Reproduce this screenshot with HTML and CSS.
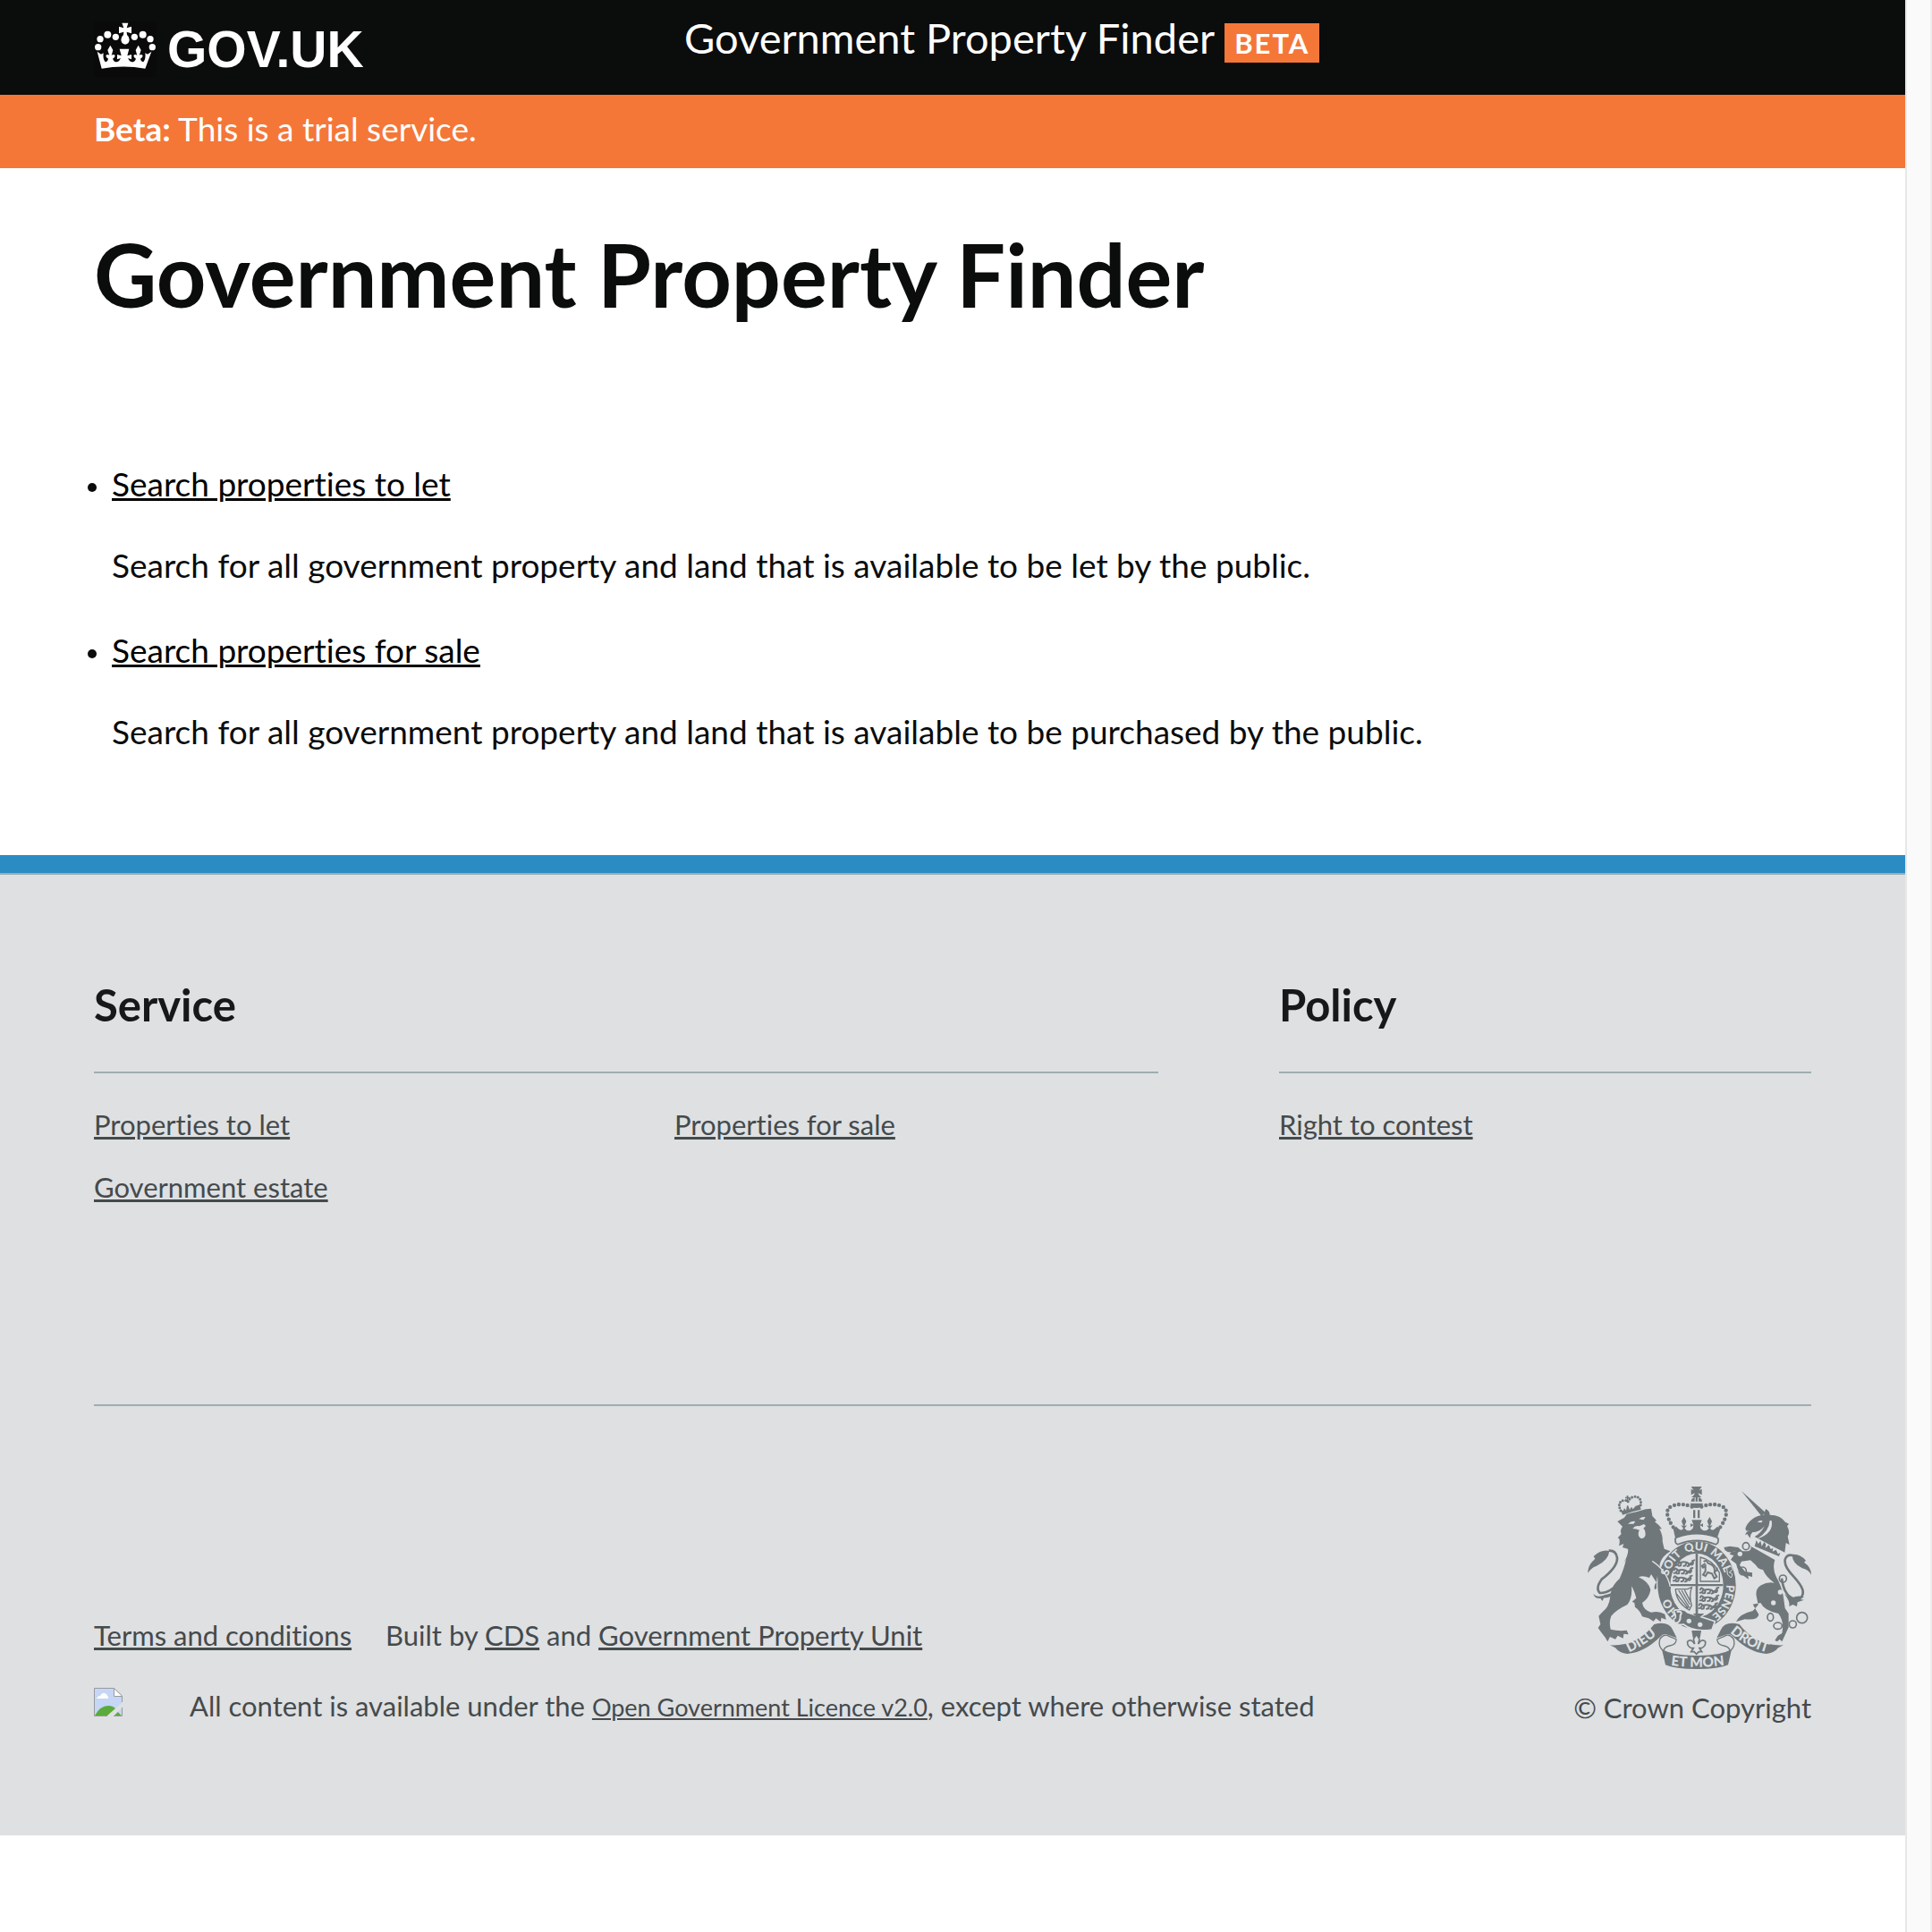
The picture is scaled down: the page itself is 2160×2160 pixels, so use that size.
FILE: index.html
```html
<!DOCTYPE html>
<html lang="en">
<head>
<meta charset="utf-8">
<meta name="viewport" content="width=device-width, initial-scale=1">
<title>Government Property Finder</title>
<link rel="stylesheet" href="styles.css">
</head>
<body>
<div class="page">
  <header class="site-header">
    <div class="container header-grid">
      <a class="logo" href="#">
        <svg class="logo-crown" viewBox="45 42 210 186" aria-hidden="true">
          <g fill="#fff">
            <circle cx="59" cy="128" r="11"/><circle cx="66" cy="101" r="11"/><circle cx="91" cy="86" r="12"/><circle cx="118" cy="94" r="11"/>
            <circle cx="181" cy="94" r="11"/><circle cx="209" cy="86" r="12"/><circle cx="234" cy="101" r="11"/><circle cx="241" cy="128" r="11"/>
            <path d="M139 47h21l-5 17 16-5v23l-16-5 1 10q8 6 8 16 0 15-14 16-14-1-14-16 0-10 8-16l1-10-16 5V59l16 5z"/>
            <path d="M57 143l13 9 8-4q-3 20 6 30 8-1 10-11-8-4-8-11 7-6 12 0l-6-18 9-16 9 16-5 18q6-6 12 0 0 7-8 11 4 12 15 11 8-3 12-13l-12 4v-16l14 4-6-23h32l-6 23 14-4v16l-12-4q4 10 12 13 11 1 15-11-8-4-8-11 6-6 12 0l-5-18 9-16 9 16-6 18q5-6 12 0 0 7-8 11 2 10 10 11 9-10 6-30l8 4 13-9-21 57q-73-13-146 0z" transform="translate(-1 0)"/>
          </g>
        </svg>
        <span class="logo-text">GOV.UK</span>
      </a>
      <div class="header-title"><a href="#">Government Property Finder</a> <span class="badge">BETA</span></div>
    </div>
  </header>

  <div class="beta-bar">
    <p class="container"><strong>Beta:</strong> This is a trial service.</p>
  </div>

  <main class="container content">
    <h1>Government Property Finder</h1>
    <ul class="services">
      <li>
        <a href="#">Search properties to let</a>
        <p>Search for all government property and land that is available to be let by the public.</p>
      </li>
      <li>
        <a href="#">Search properties for sale</a>
        <p>Search for all government property and land that is available to be purchased by the public.</p>
      </li>
    </ul>
  </main>

  <footer class="footer">
    <div class="container">
      <div class="footer-nav">
        <section>
          <h2>Service</h2>
          <ul class="links two-col">
            <li><a href="#">Properties to let</a></li>
            <li><a href="#">Properties for sale</a></li>
            <li><a href="#">Government estate</a></li>
          </ul>
        </section>
        <section>
          <h2>Policy</h2>
          <ul class="links">
            <li><a href="#">Right to contest</a></li>
          </ul>
        </section>
      </div>
      <div class="footer-meta">
        <div class="meta-text">
          <ul class="meta-links">
            <li><a href="#">Terms and conditions</a></li>
            <li>Built by <a href="#">CDS</a> and <a href="#">Government Property Unit</a></li>
          </ul>
          <div class="licence">
            <svg class="licence-icon" viewBox="0 0 32 32" aria-hidden="true">
              <path d="M1 1h21.500l8.500 8.500V31H1z" fill="#c6d6f5"/>
              <path d="M3 12q1-3 4-3 2-4 5-3 3 1 3 3 2 1 1 3z" fill="#fff"/>
              <path d="M1 31q6-11 15-11 5 0 8 3l5 8z" fill="#5aab3c"/>
              <path d="M22.500 1v8.500H31z" fill="#fff"/>
              <path d="M32 16v6l-9 9h-8z" fill="#dee0e2"/>
              <path d="M27 27l-4 4h8z" fill="#5aab3c"/>
              <path d="M27 27l4-4v8z" fill="#c6d6f5"/>
              <path d="M31.500 16V9L22.500 .5H.5v31H15M22.500 1v8.500H31M31.500 22v9.500H22" fill="none" stroke="#979b9f"/>
            </svg>
            <p>All content is available under the <a class="ogl" href="#">Open Government Licence v2.0</a>, except where otherwise stated</p>
          </div>
        </div>
        <a class="copyright" href="#">
          <svg class="crest" viewBox="105 66 750 612" aria-hidden="true">
            <defs>
              <path id="garter" d="M471 514A99 117 0 0 1 471 280A99 117 0 0 1 471 514"/>
              <path id="motto-l" d="M244 622Q300 598 352 550"/>
              <path id="motto-c" d="M384 665Q471 677 562 665"/>
              <path id="motto-r" d="M582 555Q634 602 706 622"/>
              <g id="mini-lion" fill="none" stroke="#6f777b" stroke-width="6" stroke-linecap="round">
                <path d="M2 7q2-8 7-4l6 5q12-4 24 0l8 6 7-6M12 8l-5 8-6 1M19 9l-2 9-6 1M36 9l-3 9-6 1M43 11l2 7-5 2M47 12q8 8 12-2l-2-8 6-2"/>
              </g>
            </defs>
            <g fill="#6f777b">
              <!-- lion -->
              <path d="M205 183l23-13 8-12q39-8 64-16l18-2 4 25 14 15-6 4q15 11 24 24h-8q12 24 10 42l6 25 21 8q-31 17-37 47l26 28q12 22 12 46l-8 24-8-16-6 14-8-18-10 14v-20l-14 10q-4-17 6-24l-18-28-6 12q-22-10-36-2 34 15 40 42-4 28-28 44 4 24 30 32 27-6 46 6l4 18-16-6-2 14-16-12-8 10-16-10-22-6q-8-22-24-32l-2-14-8-4 14-12q-6-25-16-40 4 40-14 62-38 18-54 38-8 20-2 45 28 7 54 3l6 14-16-2-2 15-18-9-8 12-18-8-8 16-8-14q-14-17-24-32l8-12-6-28 14-15q20-15 24-45 2-40 32-65 16-35 22-65l-8 12q18-32 14-47l-18-5 4-12-16 7q6-25-4-27l12-13q-6-13 4-25z"/>
              <path d="M178 282q-27-6-53 18l5 8q-25 22-24 48 14-21 29-24 40-19 43-50z"/>
              <path d="M124 425q12 16 40 4 22-4 30-12-10 24-34 22l-6 11-6-9q-20 2-24-16z"/>
              <!-- lion crown -->
              <path d="M222 161l-7-20 9 7 4-10 6 8 3-16h4l5 14 6-10 5 8 9-11 14-4 4 16q-30 6-62 18z"/>
              <path d="M236 96h5v5h6v5h-6v12h-4v-12h-6v-5h5z"/>
              <g fill="none" stroke="#6f777b" stroke-width="9" stroke-dasharray="0 10" stroke-linecap="round"><path d="M216 147q-14-31 12-35 8 0 12 6 6-16 22-18 27 0 20 32"/></g>
              <!-- unicorn -->
              <path d="M621 81l81 73-14 11z"/>
              <path d="M634 208q4-18 22-32 16-14 40-15l6-20q14 6 14 20 36 0 52 24l12 6-6 8q12 20 2 34l6 28-12-6-4 32q-70-34-98-46l-4-6q24-14 34-36-18 22-40 20l-6 8-2 12-10-14-6 4q0-10 14-16l-10 2z"/>
              <path d="M645 262l88 50q-10 30 6 60 14 22 22 60l6 42 12 18v46l-22 48-8-8-8 8-8-4 10-16 14-8q8-40-12-66-48-10-60-36l-26 5 20 34q-2 20-46 16l-30 8q12-26 56-36l18-20-6-30q-4-24 16-36 20-12 44-8-28-20-38-44-16-2-24-16l-18-16-30 4-6 12 18 22 24 4v14l-14-4 2 12-20-14q-16-10-22-38l-18-14 10-14-14-4 8-10h50q16 0 14-18z"/>
              <path d="M640 310l-24-6-4-16-16-6q-14 10-30-2l-4-10 20-4 28 4 16 14 6 16z"/>
              <path d="M791 294q24-4 46 20l-6 6q24 16 24 42-10-18-30-22-34-16-34-46z"/>
              <path d="M765 426q18 14 28 12 16-8 38-2l-14 8 14 2-22 8-2 14-14-6-12 6q4-16-16-42z"/>
            </g>
            <!-- faces, chain and collar -->
            <g fill="#dee0e2">
              <path d="M240 191q12-12 25-8l-6 8zM277 175q12-10 22-6l-7 9z"/>
              <path d="M256 207q8-12 22-8l16-7 6 6-8 8q6 4 7 18a12 15 0 0 1-24 2q0-10 4-14-12-4-23-5z"/>
              <path d="M674 185q8-8 18-4l-4 6zM657 238l8-4 96 52-14 26-92-44z"/>
              <path d="M722 180q8 44-50 62 42-24 44-62z"/>
              <circle cx="751" cy="420" r="8"/><circle cx="728" cy="456" r="8"/><circle cx="616" cy="292" r="8"/>
            </g>
            <path fill="#6f777b" d="M665 266l6-20 6 12 8-10 4 18 8-14 6 8-2 12 12-10 6 14 8-4-2 12 12-6 6 14 8-4-4 12z"/>
            <g fill="none" stroke="#6f777b">
              <path d="M216 385q-40 40-70 38-16-16 6-46 54-42 52-72-4-26-28-24" stroke-width="8"/>
              <path d="M756 374q8 66 52 72 24-10 18-34-6-18-28-42-38-38-30-62 8-18 28-10" stroke-width="8"/>
              <g stroke-width="5"><ellipse cx="636" cy="266" rx="11" ry="12"/><ellipse cx="625" cy="349" rx="12" ry="13"/><ellipse cx="760" cy="375" rx="12" ry="12"/><ellipse cx="718" cy="504" rx="10" ry="13"/><ellipse cx="743" cy="533" rx="14" ry="11"/><circle cx="793" cy="528" r="12"/><circle cx="824" cy="506" r="18"/></g>
            </g>
            <!-- garter -->
            <ellipse cx="471" cy="397" rx="135" ry="151" fill="#dee0e2"/>
            <ellipse cx="471" cy="397" rx="131" ry="147" fill="#6f777b"/>
            <ellipse cx="471" cy="397" rx="89" ry="107" fill="#dee0e2"/>
            <path d="M335 322l22 28q20 28 27 56l-8 24-8-16-6 14-8-18-10 14z" fill="#6f777b"/>
            <path d="M322 316q50 34 60 86" fill="none" stroke="#dee0e2" stroke-width="4"/>
            <g class="crest-text" font-size="38">
              <text><textPath href="#garter" startOffset="66">HO</textPath></text>
              <text><textPath href="#garter" startOffset="200">SOIT</textPath></text>
              <text><textPath href="#garter" startOffset="301">QUI</textPath></text>
              <text><textPath href="#garter" startOffset="384">MAL</textPath></text>
              <text><textPath href="#garter" startOffset="508">PENSE</textPath></text>
            </g>
            <!-- quartered shield -->
            <g fill="#6f777b"><path d="M467 291h8v212h-8zM383 393h176v7H383z"/></g>
            <use href="#mini-lion" x="400" y="313"/><use href="#mini-lion" x="394" y="339"/><use href="#mini-lion" x="392" y="365"/>
            <use href="#mini-lion" x="481" y="405"/><use href="#mini-lion" x="481" y="431"/><use href="#mini-lion" x="477" y="457"/>
            <g fill="none" stroke="#6f777b" stroke-width="4">
              <path d="M483 384V303q40 8 64 52v29zM400 410h40l14-6q-10 30 0 60l-8 16q-44-24-46-70zM410 414l36 58M420 414l28 48M430 413l20 38M402 424l40 50"/>
              <path d="M494 318q10-8 14 4l16 8q10 14 6 24l8 14-8 6-8-16-14-4-8 12-8-4 8-12v-18l-8 6-4-6 12-8M530 352q12-4 8-14" stroke-width="6"/>
            </g>
            <path d="M572 340l14-8 6 12-12 10q16 2 6 18l-12-12z" fill="#6f777b" stroke="#dee0e2" stroke-width="3"/>
            <!-- garter buckle -->
            <path d="M398 492q-10-14 8-12 22-6 34 8l92 30-10 28q-60 10-96-18-34 6-32-18 10-2 4-18z" fill="#6f777b" stroke="#dee0e2" stroke-width="5"/>
            <path d="M404 486q22-4 12 12 2 26-18 26" fill="none" stroke="#dee0e2" stroke-width="6"/>
            <g fill="#dee0e2"><circle cx="445" cy="517" r="8"/><circle cx="482" cy="529" r="8"/></g>
            <path d="M458 492h38l-14 12h-10z" fill="#6f777b"/>
            <!-- royal crown -->
            <g fill="#6f777b">
              <path d="M452 66h36l-9 13 9-5v20l-12-6q0 6 11 14h-34q11-8 11-14l-12 6V74l9 5zM467 102h7v14h-7zM452 116q0-10 12-14v14zM489 116q0-10-12-14v14zM449 122h43q-3 15-22 16-18-1-21-16zM459 145h7v27h-7zM474 145h7v27h-7z"/>
              <path d="M392 208l10-8 8 8q10 8 16-2l-8-10 8 2-6-16 8-14 8 14-6 16 8-2-8 10q14 16 28 0l2-10-10 6v-12l10 4-6-16h34l-6 16 10-4v12l-10-6 2 10q14 16 28 0l-8-10 8 2-6-16 8-14 8 14-6 16 8-2-8 10q6 10 16 2l8-8 10 8-12 34q-68-24-138 0z"/>
            </g>
            <g fill="none" stroke="#6f777b" stroke-width="13" stroke-linecap="round" stroke-dasharray="0 15">
              <path d="M392 202Q352 142 392 130Q420 120 456 134"/><path d="M550 202Q590 142 550 130Q522 120 486 134"/>
            </g>
            <path d="M405 236q66-24 132 0 8 2 6 12 0 8-8 12-64-26-128 0-8-4-8-12-2-10 6-12z" fill="#dee0e2" stroke="#6f777b" stroke-width="5"/>
            <!-- motto ribbon -->
            <path d="M454 549h32l-4 24h-24z" fill="#6f777b"/>
            <path d="M470 562l10 16-4 16q12-20 24-8 2 16-14 22h-6l8 12h-10l-8 8-8-8h-10l8-12h-6q-16-6-14-22 12-12 24 8l-4-16z" fill="#dee0e2" stroke="#6f777b" stroke-width="5"/>
            <g fill="#6f777b">
              <path d="M180 598q92 4 148-70 48-12 62 18l14 28-28-10q-16-8-28 6-52 52-110 57-26-2-40-20z"/>
              <path d="M762 598q-92 4-148-70-48-12-62 18l-14 28 28-10q16-8 28 6 52 52 110 57 26-2 40-20z"/>
              <path d="M354 612q40 22 117 21 77 1 117-21l-12 52q-30 14-105 14t-105-14z"/>
            </g>
            <g fill="#dee0e2" stroke="#6f777b" stroke-width="4">
              <path d="M348 576q14-18 30-8l24 10q2 18-22 22-20 4-20 18-18-14-14-34z"/>
              <path d="M594 576q-14-18-30-8l-24 10q-2 18 22 22 20 4 20 18 18-14 14-34z"/>
            </g>
            <g class="crest-text" font-size="46">
              <text><textPath href="#motto-l">DIEU</textPath></text>
              <text><textPath href="#motto-c">ET MON</textPath></text>
              <text><textPath href="#motto-r">DROIT</textPath></text>
            </g>
          </svg>
          <span>© Crown Copyright</span>
        </a>
      </div>
    </div>
  </footer>
</div>
<div class="gutter" aria-hidden="true"></div>
</body>
</html>
```
FILE: styles.css
```css
* { box-sizing: border-box; }

body {
  margin: 0;
  min-height: 100vh;
  display: grid;
  grid-template-columns: minmax(0, 1fr) 30px;
  background: #fff;
  color: #0b0c0c;
  font: 37px/50px Lato, "Liberation Sans", sans-serif;
  font-variant-ligatures: none;
}

h1, h2, p, ul { margin: 0; padding: 0; }
a { color: inherit; text-decoration: none; }

.container { padding-left: 105px; padding-right: 105px; }

.gutter {
  background: #fafafa;
  border-left: 2px solid #e8e8e8;
  border-right: 2px solid #ededed;
}

/* Header */
.site-header { background: #0b0c0c; color: #fff; }
.header-grid {
  display: grid;
  grid-template-columns: 1fr 2fr;
  column-gap: 30px;
  min-height: 106px;
}
.logo { display: flex; gap: 12px; padding-top: 24px; }
.logo-crown { width: 70px; height: 62px; background: #0a0a0a; }
.logo-text { font: bold 57px/62px "Liberation Sans", Arial, sans-serif; }
.header-title { padding-top: 14px; font-size: 47px; line-height: 56px; }
.badge {
  display: inline-block;
  padding: 0 11px;
  background: #f47738;
  font-size: 31px;
  font-weight: bold;
  line-height: 44px;
  letter-spacing: 2px;
}

.beta-bar { background: #f47738; color: #fff; line-height: 44px; }
.beta-bar p { padding-top: 16px; padding-bottom: 22px; }

/* Main content */
.content { padding-top: 67px; padding-bottom: 113px; }
.content h1 { font-size: 97px; line-height: 104px; }
.services {
  display: grid;
  gap: 45px;
  margin-top: 157px;
  padding-left: 20px;
}
.services li::marker { font-size: 31px; }
.services p { margin-top: 41px; }
.services a { color: #000; }

.services a, .links a, .meta-text a {
  text-decoration: underline;
  text-decoration-thickness: 3px;
  text-underline-offset: 2px;
}

/* Footer */
.footer {
  border-top: 20px solid #2b8cc4;
  background: #dee0e2;
  color: #454a4c;
  font-size: 31px;
  line-height: 40px;
}
.footer > .container {
  border-top: 2px solid #a1acb2;
  padding-top: 116px;
  padding-bottom: 123px;
}
.footer-nav {
  display: grid;
  grid-template-columns: 2fr 1fr;
  gap: 135px;
  padding-bottom: 223px;
  border-bottom: 2px solid #9fadb0;
}
.footer h2 {
  padding-bottom: 46px;
  border-bottom: 2px solid #9fadb0;
  color: #171819;
  font-size: 49px;
  line-height: 58px;
}
.links { display: grid; gap: 30px 108px; margin-top: 37px; list-style: none; }
.two-col { grid-template-columns: 1fr 1fr; }

.footer-meta {
  display: flex;
  justify-content: space-between;
  align-items: flex-end;
  padding-top: 90px;
}
.meta-links { display: flex; flex-wrap: wrap; gap: 38px; list-style: none; }
.licence { display: flex; gap: 75px; margin-top: 39px; }
.licence-icon { flex: none; width: 32px; height: 32px; }
.meta-text .ogl { font-size: 27px; text-decoration-thickness: 2px; }

.copyright {
  display: flex;
  flex-direction: column;
  align-items: flex-end;
  gap: 23px;
}
.crest { width: 250px; height: 204px; }
.crest-text { fill: #dee0e2; font-family: Lato, sans-serif; font-weight: 900; }
```
